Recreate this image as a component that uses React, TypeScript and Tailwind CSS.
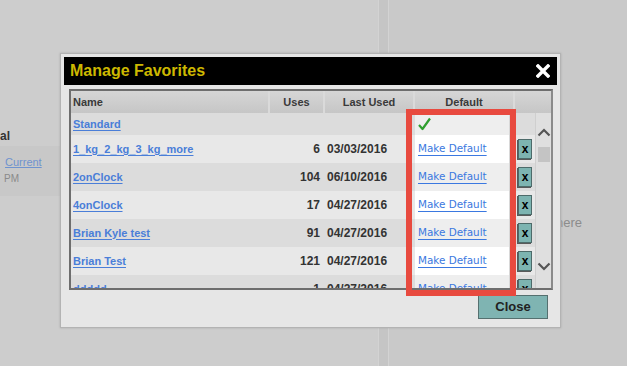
import React from "react";

type Fav = { name: string; uses?: number; lastUsed?: string; isDefault?: boolean };

const favorites: Fav[] = [
  { name: "Standard", isDefault: true },
  { name: "1_kg_2_kg_3_kg_more", uses: 6, lastUsed: "03/03/2016" },
  { name: "2onClock", uses: 104, lastUsed: "06/10/2016" },
  { name: "4onClock", uses: 17, lastUsed: "04/27/2016" },
  { name: "Brian Kyle test", uses: 91, lastUsed: "04/27/2016" },
  { name: "Brian Test", uses: 121, lastUsed: "04/27/2016" },
  { name: "ddddd", uses: 1, lastUsed: "04/27/2016" },
];

function CloseIcon(): React.JSX.Element {
  return (
    <svg width="14" height="14" viewBox="0 0 14 14">
      <path d="M2 2L12 12M12 2L2 12" stroke="#ffffff" strokeWidth="3.4" strokeLinecap="square" />
    </svg>
  );
}

function Check(): React.JSX.Element {
  return (
    <svg width="13" height="14" viewBox="0 0 13 14">
      <path d="M1 8L4.5 12L12 1.5" stroke="#2f9e2f" strokeWidth="2.2" fill="none" strokeLinejoin="round" />
    </svg>
  );
}

function Chevron({ down }: { down?: boolean }): React.JSX.Element {
  return (
    <svg width="14" height="9" viewBox="0 0 14 9">
      <path
        d={down ? "M1.5 1.5L7 7L12.5 1.5" : "M1.5 7.5L7 2L12.5 7.5"}
        stroke="#555555"
        strokeWidth="2.2"
        fill="none"
      />
    </svg>
  );
}

function FavRow({ fav, index }: { fav: Fav; index: number }): React.JSX.Element {
  const dark = index % 2 === 0;
  return (
    <div
      className={`grid shrink-0 grid-cols-[199px_55px_90px_100px_20px] items-center ${
        fav.isDefault ? "h-[22px]" : "h-[28px]"
      } ${dark ? "bg-[#dcdcdc]" : "bg-[#e8e8e8]"}`}
    >
      <div className="pl-[2px] text-[11px] font-bold text-[#4a7ed8] underline underline-offset-2">{fav.name}</div>
      <div className="pr-[5px] text-right text-[12px] font-bold text-[#333]">{fav.uses}</div>
      <div className="pl-[2px] text-[12px] font-bold text-[#333]">{fav.lastUsed}</div>
      <div
        className={`flex h-full items-center pl-[3px] ${dark ? "bg-[#eeeeee]" : "bg-white"} border-r-[6px] border-[#d8d8d8]`}
      >
        {fav.isDefault ? (
          <Check />
        ) : (
          <span className="font-['DejaVu_Sans',Verdana,sans-serif] text-[10.4px] text-[#3b78e0] underline underline-offset-[3px]">
            Make Default
          </span>
        )}
      </div>
      <div className="flex h-full items-center pl-[3px]">
        {fav.isDefault ? null : (
          <div className="flex h-[20px] w-[14px] items-center justify-center border border-[#4d6b6a] bg-[#7db4b1] text-[12px] font-bold leading-none text-black shadow-[-1px_1px_0_#5a5a5a]">
            x
          </div>
        )}
      </div>
    </div>
  );
}

function ManageFavorites(): React.JSX.Element {
  return (
    <div className="flex h-[275px] w-[501px] flex-col border border-[#b3b3b3] bg-[#e6e6e6] p-[3px] shadow-[0_0_2px_#aaa]">
      <div className="flex h-[28px] shrink-0 items-center justify-between bg-black pl-[6px] pr-[7px]">
        <span className="text-[16px] font-bold text-[#cdb800]">Manage Favorites</span>
        <CloseIcon />
      </div>

      <div className="pl-[5px] pr-[4px] pt-[4px]">
        <div className="flex h-[201px] flex-col overflow-hidden border-2 border-[#6e6e6e] border-r-[#8a8a8a]">
          <div className="grid h-[22px] shrink-0 grid-cols-[199px_55px_90px_100px_36px] text-[11px] font-bold text-[#3a3a3a]">
            <div className="flex items-center border-r-2 border-[#dadada] bg-gradient-to-b from-[#d6d6d6] to-[#c6c6c6] pl-[2px]">Name</div>
            <div className="flex items-center justify-center border-r-2 border-[#dadada] bg-gradient-to-b from-[#d6d6d6] to-[#c6c6c6]">Uses</div>
            <div className="flex items-center justify-center border-r-2 border-[#dadada] bg-gradient-to-b from-[#d6d6d6] to-[#c6c6c6]">Last Used</div>
            <div className="flex items-center justify-center border-r-2 border-[#dadada] bg-gradient-to-b from-[#d6d6d6] to-[#c6c6c6]">Default</div>
            <div className="bg-gradient-to-b from-[#d6d6d6] to-[#c6c6c6]" />
          </div>
          <div className="flex min-h-0 flex-1">
            <div className="flex w-[464px] flex-col overflow-hidden">
              {favorites.map((fav, i) => (
                <FavRow key={fav.name} fav={fav} index={i} />
              ))}
            </div>
            <div className="flex w-[16px] flex-col items-center border-l border-[#cfcfcf] bg-[#dfdfdf] pt-[15px]">
              <Chevron />
              <div className="mt-[10px] h-[15px] w-[12px] bg-[#c4c4c4]" />
              <div className="mt-[100px]">
                <Chevron down />
              </div>
            </div>
          </div>
        </div>
      </div>

      <div className="flex justify-end pr-[9px] pt-[5px]">
        <button
          type="button"
          className="h-[24px] w-[70px] border border-[#55706f] bg-[#7fb4b2] text-[13px] font-bold text-[#222]"
        >
          Close
        </button>
      </div>
    </div>
  );
}

export default function App(): React.JSX.Element {
  return (
    <div className="relative h-[366px] w-[627px] overflow-hidden bg-[#cdcdcd] font-['Liberation_Sans',Arial,sans-serif]">
      <div className="flex h-full">
        <section className="flex w-[378px] flex-col pt-[126px]">
          <div className="h-[20px] text-[12px] font-bold leading-[20px] text-[#333]">al</div>
          <div className="flex h-[50px] flex-col bg-[#c8c8c8] pl-[5px] pt-[8px] text-[11px]">
            <span className="text-[#6f93cf] underline">Current</span>
            <span className="-ml-[1px] text-[10px] text-[#8a8a8a]">PM</span>
          </div>
        </section>
        <div className="w-[11px] border-x border-[#d3d3d3] bg-[#c5c5c5]" />
        <section className="flex-1 bg-[#c9c9c9] pl-[167px] pt-[210px]">
          <span className="text-[13px] text-[#8c8c8c]">here</span>
        </section>
      </div>

      <div className="absolute left-[60px] top-[53px]">
        <ManageFavorites />
      </div>

      <div className="pointer-events-none absolute left-[406px] top-[109px] h-[187px] w-[110px] border-[6px] border-[#e84a3f]" />
    </div>
  );
}
